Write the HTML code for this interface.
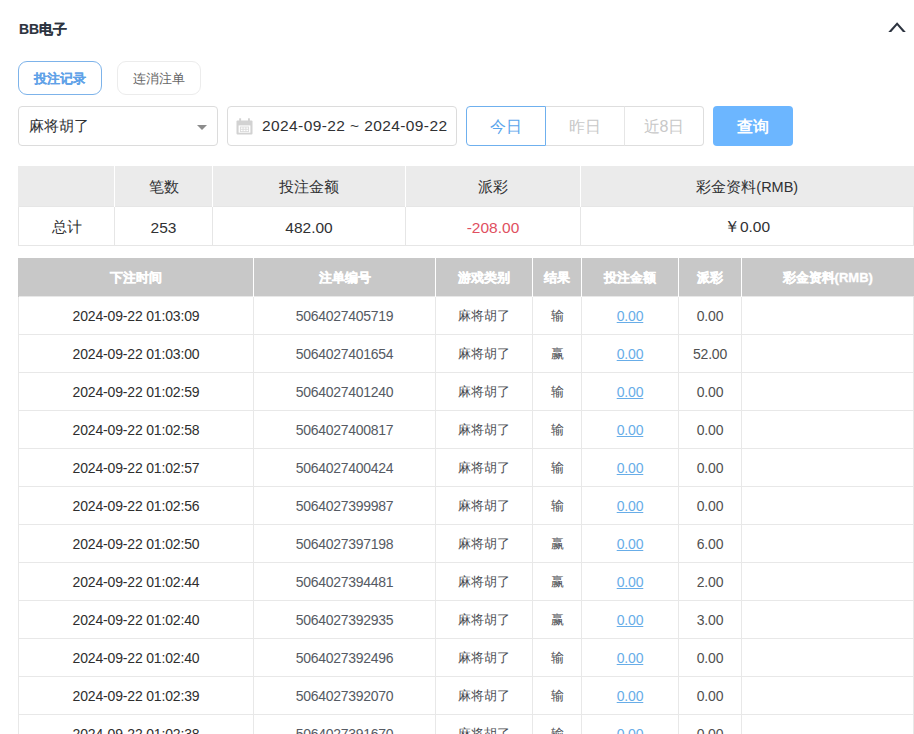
<!DOCTYPE html>
<html><head><meta charset="utf-8">
<style>
*{box-sizing:border-box;margin:0;padding:0}
html,body{width:914px;height:734px;overflow:hidden;background:#fff}
body{position:relative;font-family:"Liberation Sans",sans-serif;color:#303133}
.abs{position:absolute}
.title{left:19px;top:19px;font-size:14px;font-weight:bold;color:#2d3440;line-height:20px;-webkit-text-stroke:0.15px #2d3440}
.chev{left:887px;top:20px}
.tab{top:61px;height:34px;border-radius:9px;font-size:13px;line-height:32px;padding-top:1px;text-align:center}
.tab1{left:18px;width:84px;border:1px solid #7db3ea;color:#5fa2e8;font-weight:bold;-webkit-text-stroke:0.1px #5fa2e8}
.tab2{left:117px;width:84px;border:1px solid #ececec;color:#666}
.inp{top:106px;height:40px;border:1px solid #dcdcdc;border-radius:4px;font-size:14.5px;line-height:38px}
.sel{left:18px;width:200px;padding-left:10px;color:#303133}
.caret{left:197px;top:125px;width:0;height:0;border-left:5px solid transparent;border-right:5px solid transparent;border-top:5px solid #8c8c8c}
.date{left:227px;width:230px;padding-left:34px;color:#303133;font-size:15.5px;letter-spacing:0.4px;white-space:nowrap}
.cal{left:236px;top:118px}
.grp{top:106px;height:40px;font-size:16px;line-height:38px;padding-top:1px;text-align:center}
.g1{left:466px;width:80px;border:1px solid #6fb0ee;border-radius:4px 0 0 4px;color:#5aa5ec}
.g2{left:546px;width:79px;border:1px solid #dedede;border-left:none;color:#c8c8c8}
.g3{left:624px;width:80px;border:1px solid #dedede;border-left:1px solid #e6e6e6;border-radius:0 4px 4px 0;color:#c8c8c8}
.qbtn{left:713px;top:106px;width:80px;height:40px;border-radius:4px;background:#6cb6ff;color:#fff;font-size:16px;font-weight:bold;line-height:40px;padding-top:1px;text-align:center}
table{position:absolute;border-collapse:collapse;table-layout:fixed;left:18px;width:895px}
td,th{text-align:center;overflow:hidden;white-space:nowrap}
.sum{top:166px}
.sum th{height:40px;background:#ebebeb;font-weight:normal;font-size:14.5px;color:#303133;border-left:1px solid #fff;padding-top:3px}
.sum th:first-child{border-left:1px solid #ebebeb}
.sum td{height:39px;font-size:15.5px;padding-top:4px;border:1px solid #e6e6e6;color:#303133}
.det{top:258px}
.det th{height:38px;background:#c8c8c8;color:#fff;font-size:13px;font-weight:bold;border-left:1px solid #fff;-webkit-text-stroke:0.35px #fff;padding-top:2px}
.det th:first-child{border-left:1px solid #c8c8c8}
.det td{height:38px;font-size:14px;letter-spacing:-0.17px;padding-top:1px;border:1px solid #e8e8e8;color:#2e2e2e}
.det td.sn{color:#555a63;letter-spacing:-0.3px}
.det td.g{font-size:13px;letter-spacing:0;color:#4a4d52}
.det td.p{color:#505050}
.det td a{color:#68ade8;text-decoration:underline}
.red{color:#e0505f !important}
</style></head><body>
<div class="abs title">BB电子</div>
<svg class="abs chev" width="20" height="14" viewBox="0 0 20 14"><path d="M10.1 2.2 L18.8 11.9 L15.9 11.9 L10.1 5.3 L4.2 11.9 L1.3 11.9 Z" fill="#2d3440"/></svg>

<div class="abs tab tab1">投注记录</div>
<div class="abs tab tab2">连消注单</div>

<div class="abs inp sel">麻将胡了</div>
<div class="abs caret"></div>
<div class="abs inp date">2024-09-22 ~ 2024-09-22</div>
<svg class="abs cal" width="17" height="17" viewBox="0 0 17 17"><rect x="0.5" y="2.6" width="16" height="14" rx="1" fill="#d2d2d2"/><rect x="2.6" y="7.4" width="11.8" height="7.3" fill="#fff"/><rect x="3.2" y="0.3" width="1.9" height="3" fill="#d2d2d2"/><rect x="12" y="0.3" width="1.9" height="3" fill="#d2d2d2"/><g fill="none" stroke="#dadada" stroke-width="0.9"><rect x="4.4" y="9" width="8.2" height="4.6"/><path d="M7.1 9V13.6M9.9 9V13.6M4.4 11.3H12.6"/></g></svg>

<div class="abs grp g1">今日</div>
<div class="abs grp g2">昨日</div>
<div class="abs grp g3">近8日</div>
<div class="abs qbtn">查询</div>

<table class="sum">
<colgroup><col style="width:96px"><col style="width:98px"><col style="width:193px"><col style="width:175px"><col style="width:333px"></colgroup>
<tr><th></th><th>笔数</th><th>投注金额</th><th>派彩</th><th>彩金资料(RMB)</th></tr>
<tr><td style="font-size:14.5px">总计</td><td>253</td><td>482.00</td><td class="red">-208.00</td><td>￥0.00</td></tr>
</table>

<table class="det">
<colgroup><col style="width:235px"><col style="width:182px"><col style="width:97px"><col style="width:49px"><col style="width:97px"><col style="width:63px"><col style="width:172px"></colgroup>
<tr><th>下注时间</th><th>注单编号</th><th>游戏类别</th><th>结果</th><th>投注金额</th><th>派彩</th><th>彩金资料(RMB)</th></tr>
<tr><td>2024-09-22 01:03:09</td><td class="sn">5064027405719</td><td class="g">麻将胡了</td><td class="g">输</td><td><a>0.00</a></td><td class="p">0.00</td><td></td></tr>
<tr><td>2024-09-22 01:03:00</td><td class="sn">5064027401654</td><td class="g">麻将胡了</td><td class="g">赢</td><td><a>0.00</a></td><td class="p">52.00</td><td></td></tr>
<tr><td>2024-09-22 01:02:59</td><td class="sn">5064027401240</td><td class="g">麻将胡了</td><td class="g">输</td><td><a>0.00</a></td><td class="p">0.00</td><td></td></tr>
<tr><td>2024-09-22 01:02:58</td><td class="sn">5064027400817</td><td class="g">麻将胡了</td><td class="g">输</td><td><a>0.00</a></td><td class="p">0.00</td><td></td></tr>
<tr><td>2024-09-22 01:02:57</td><td class="sn">5064027400424</td><td class="g">麻将胡了</td><td class="g">输</td><td><a>0.00</a></td><td class="p">0.00</td><td></td></tr>
<tr><td>2024-09-22 01:02:56</td><td class="sn">5064027399987</td><td class="g">麻将胡了</td><td class="g">输</td><td><a>0.00</a></td><td class="p">0.00</td><td></td></tr>
<tr><td>2024-09-22 01:02:50</td><td class="sn">5064027397198</td><td class="g">麻将胡了</td><td class="g">赢</td><td><a>0.00</a></td><td class="p">6.00</td><td></td></tr>
<tr><td>2024-09-22 01:02:44</td><td class="sn">5064027394481</td><td class="g">麻将胡了</td><td class="g">赢</td><td><a>0.00</a></td><td class="p">2.00</td><td></td></tr>
<tr><td>2024-09-22 01:02:40</td><td class="sn">5064027392935</td><td class="g">麻将胡了</td><td class="g">赢</td><td><a>0.00</a></td><td class="p">3.00</td><td></td></tr>
<tr><td>2024-09-22 01:02:40</td><td class="sn">5064027392496</td><td class="g">麻将胡了</td><td class="g">输</td><td><a>0.00</a></td><td class="p">0.00</td><td></td></tr>
<tr><td>2024-09-22 01:02:39</td><td class="sn">5064027392070</td><td class="g">麻将胡了</td><td class="g">输</td><td><a>0.00</a></td><td class="p">0.00</td><td></td></tr>
<tr><td>2024-09-22 01:02:38</td><td class="sn">5064027391670</td><td class="g">麻将胡了</td><td class="g">输</td><td><a>0.00</a></td><td class="p">0.00</td><td></td></tr>
</table>
</body></html>
